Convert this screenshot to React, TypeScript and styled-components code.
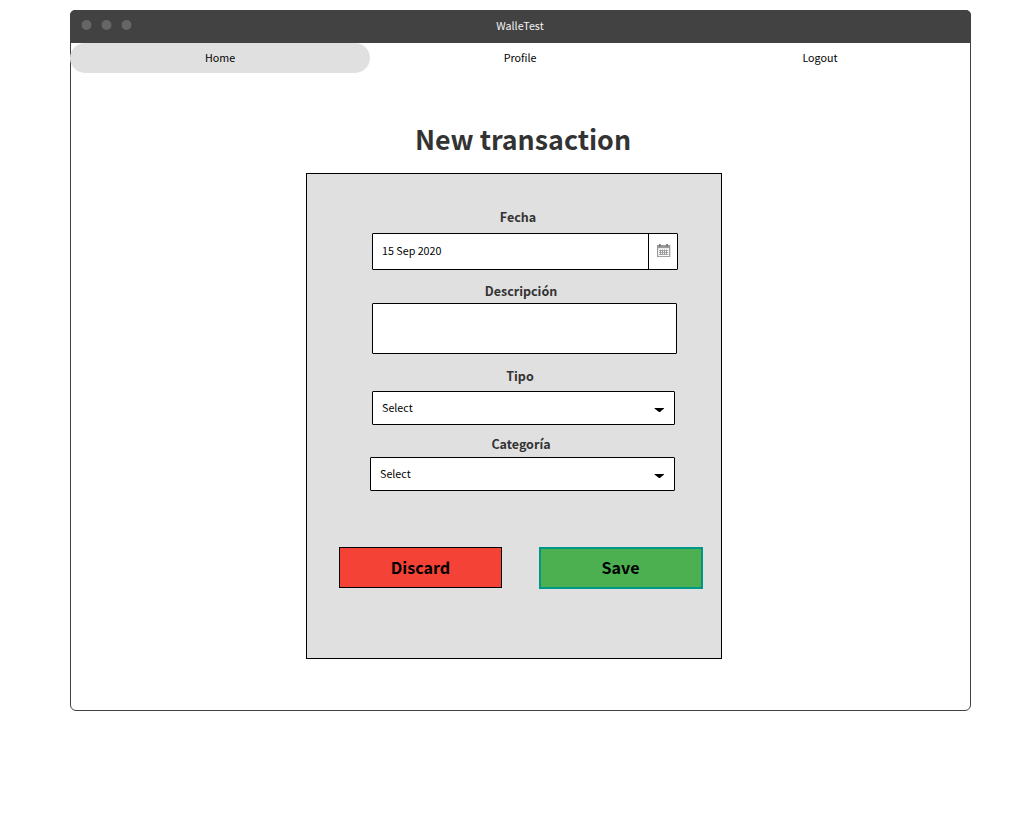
import React from "react";
import styled, { createGlobalStyle } from "styled-components";

const GlobalStyle = createGlobalStyle`
  *, *::before, *::after { box-sizing: border-box; }
  body {
    margin: 0;
    background: #fff;
    color: #000;
    font-family: "Noto Sans CJK SC", "Noto Sans", sans-serif;
    font-size: 10.72px;
  }
`;

const Page = styled.div`
  height: 820px;
  padding: 10px 50px 0 70px;
`;

const Window = styled.main`
  display: flex;
  flex-direction: column;
  width: 901px;
  height: 701px;
  border: 1px solid #424242;
  border-radius: 6px;
`;

const TitleBar = styled.header`
  display: grid;
  grid-template-columns: 1fr auto 1fr;
  height: 33px;
  margin: -1px -1px 0;
  padding: 0 12px 0 11px;
  border-radius: 5px 5px 0 0;
  background: #424242;
  color: #f2f2f2;
  line-height: 32px;
`;

const Dots = styled.svg`
  width: 51px;
  height: 12px;
  margin-top: 9px;
  fill: #666;
`;

const Tabs = styled.nav`
  display: flex;
  margin-left: -1px;
`;

const Tab = styled.a<{ $active?: boolean }>`
  width: 300px;
  height: 30px;
  border-radius: 15px;
  background: ${(p) => (p.$active ? "#e0e0e0" : "transparent")};
  line-height: 30px;
  text-align: center;
`;

const Heading = styled.h1`
  width: 432px;
  height: 44px;
  margin: 44px 0 0 236px;
  color: #333;
  font-size: 26.8px;
  font-weight: 700;
  line-height: 44px;
  text-align: center;
`;

const Form = styled.form`
  width: 416px;
  height: 486px;
  margin: 12px 0 0 235px;
  padding: 33px 0 0 63px;
  border: 1px solid #000;
  background: #e0e0e0;
`;

const Label = styled.label<{ $gap?: number; $shift?: number; $below: number }>`
  display: block;
  width: 302px;
  height: 20px;
  margin: ${(p) => p.$gap ?? 0}px 0 ${(p) => p.$below}px ${(p) => p.$shift ?? 0}px;
  color: #333;
  font-size: 12.5px;
  font-weight: 700;
  line-height: 20px;
  text-align: center;
`;

const Field = styled.div<{ $width: number; $height: number; $inset?: number }>`
  display: flex;
  align-items: stretch;
  justify-content: space-between;
  width: ${(p) => p.$width}px;
  height: ${(p) => p.$height}px;
  margin-left: ${(p) => p.$inset ?? 0}px;
  padding-left: 9px;
  border: 1px solid #000;
  border-radius: 1px;
  background: #fff;
  line-height: ${(p) => Math.floor((p.$height - 2) / 2) * 2}px;
`;

const CalendarButton = styled.span`
  width: 29px;
  padding: 10px 0 0 8px;
  border-left: 1px solid #000;
  svg { display: block; }
`;

const Caret = styled.svg`
  width: 10px;
  height: 5px;
  margin: 15px 10px 0 0;
`;

const Actions = styled.div`
  display: flex;
  align-items: flex-start;
  gap: 37px;
  margin: 56px 0 0 -31px;
`;

const Button = styled.button<{ $tone: "danger" | "success" }>`
  display: flex;
  justify-content: center;
  align-items: flex-start;
  width: ${(p) => (p.$tone === "danger" ? 163 : 164)}px;
  height: ${(p) => (p.$tone === "danger" ? 41 : 42)}px;
  padding: ${(p) => (p.$tone === "danger" ? "1px 0 0" : "0 1px 0 0")};
  border: ${(p) => (p.$tone === "danger" ? "1px solid #000" : "2px solid #009688")};
  background: ${(p) => (p.$tone === "danger" ? "#f44336" : "#4caf50")};
  color: #000;
  font: 700 16.1px/36px "Noto Sans CJK SC", "Noto Sans", sans-serif;
`;

const CalendarIcon = () => (
  <svg width="14" height="14" viewBox="0 0 14 14">
    <path d="M0 1h13.300v12H0z" fill="#999" />
    <path d="M1.200 4.200h10.900v7.900H1.200z" fill="#fff" />
    <path d="M2 0h1.800v2.500H2zM9.200 0h1.800v2.500H9.200z" fill="#777" />
    <path d="M2 6.500h9.300M2 8.500h9.300M2 10.500h9.300" stroke="#aaa" />
    <path d="M3.500 5.500v5.500M5.500 5.500v5.500M7.500 5.500v5.500M9.500 5.500v5.500" stroke="#999" />
  </svg>
);

const CaretIcon = () => (
  <Caret viewBox="0 0 10 5">
    <path d="M.5 1h9.500v.6L6 5H5L.5 1.600z" />
  </Caret>
);

export default function App() {
  return (
    <Page>
      <GlobalStyle />
      <Window>
        <TitleBar>
          <Dots viewBox="0 0 51 12">
            <circle cx="5.500" cy="6" r="5" />
            <circle cx="25.500" cy="6" r="5" />
            <circle cx="45.500" cy="6" r="5" />
          </Dots>
          <span>WalleTest</span>
        </TitleBar>
        <Tabs>
          <Tab $active>Home</Tab>
          <Tab>Profile</Tab>
          <Tab>Logout</Tab>
        </Tabs>
        <Heading>New transaction</Heading>
        <Form>
          <Label $shift={-3} $below={6}>Fecha</Label>
          <Field $width={306} $height={37} $inset={2}>
            <span>15 Sep 2020</span>
            <CalendarButton><CalendarIcon /></CalendarButton>
          </Field>
          <Label $gap={11} $below={2}>Descripción</Label>
          <Field $width={305} $height={51} $inset={2} />
          <Label $gap={12} $shift={-1} $below={5}>Tipo</Label>
          <Field $width={303} $height={34} $inset={2}>
            <span>Select</span>
            <CaretIcon />
          </Field>
          <Label $gap={9} $below={3}>Categoría</Label>
          <Field $width={305} $height={34}>
            <span>Select</span>
            <CaretIcon />
          </Field>
          <Actions>
            <Button type="button" $tone="danger">Discard</Button>
            <Button type="button" $tone="success">Save</Button>
          </Actions>
        </Form>
      </Window>
    </Page>
  );
}
